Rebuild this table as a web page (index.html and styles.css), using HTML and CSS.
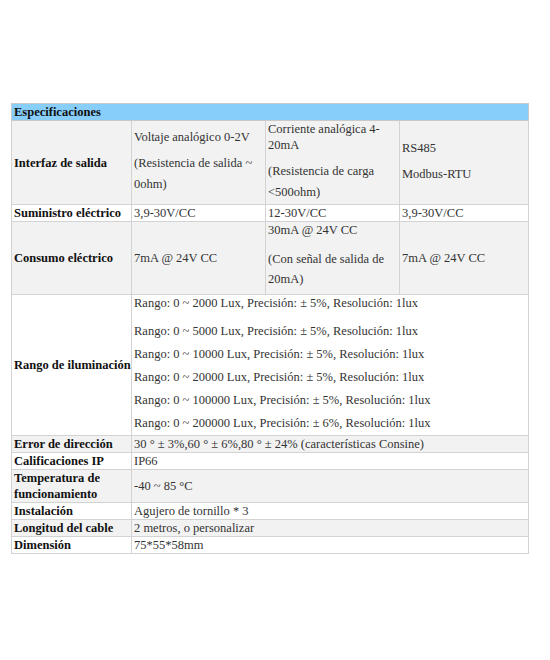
FILE: index.html
```html
<!DOCTYPE html>
<html lang="es">
<head>
<meta charset="utf-8">
<title>Especificaciones</title>
<link rel="stylesheet" href="styles.css">
</head>
<body>
<div class="page">
<table class="spec">
<colgroup>
<col class="c1"><col class="c2"><col class="c3"><col class="c4">
</colgroup>
<tr class="head"><th colspan="4">Especificaciones</th></tr>
<tr class="alt">
<th>Interfaz de salida</th>
<td><div>Voltaje analógico 0-2V</div><p class="sub">(Resistencia de salida ~ 0ohm)</p></td>
<td><div>Corriente analógica 4-20mA</div><p class="sub">(Resistencia de carga &lt;500ohm)</p></td>
<td><div>RS485</div><p class="sub">Modbus-RTU</p></td>
</tr>
<tr>
<th>Suministro eléctrico</th>
<td>3,9-30V/CC</td>
<td>12-30V/CC</td>
<td>3,9-30V/CC</td>
</tr>
<tr class="alt">
<th>Consumo eléctrico</th>
<td>7mA @ 24V CC</td>
<td><div>30mA @ 24V CC</div><p class="sub power">(Con señal de salida de 20mA)</p></td>
<td>7mA @ 24V CC</td>
</tr>
<tr>
<th class="nowrap">Rango de iluminación</th>
<td colspan="3"><div>Rango: 0 ~ 2000 Lux, Precisión: ± 5%, Resolución: 1lux</div><p class="sub range">Rango: 0 ~ 5000 Lux, Precisión: ± 5%, Resolución: 1lux<br>Rango: 0 ~ 10000 Lux, Precisión: ± 5%, Resolución: 1lux<br>Rango: 0 ~ 20000 Lux, Precisión: ± 5%, Resolución: 1lux<br>Rango: 0 ~ 100000 Lux, Precisión: ± 5%, Resolución: 1lux<br>Rango: 0 ~ 200000 Lux, Precisión: ± 6%, Resolución: 1lux</p></td>
</tr>
<tr class="alt">
<th>Error de dirección</th>
<td colspan="3">30 ° ± 3%,60 ° ± 6%,80 ° ± 24% (características Consine)</td>
</tr>
<tr>
<th>Calificaciones IP</th>
<td colspan="3">IP66</td>
</tr>
<tr class="alt">
<th>Temperatura de funcionamiento</th>
<td colspan="3">-40 ~ 85 °C</td>
</tr>
<tr>
<th>Instalación</th>
<td colspan="3">Agujero de tornillo * 3</td>
</tr>
<tr class="alt">
<th>Longitud del cable</th>
<td colspan="3">2 metros, o personalizar</td>
</tr>
<tr>
<th>Dimensión</th>
<td colspan="3">75*55*58mm</td>
</tr>
</table>
</div>
</body>
</html>
```
FILE: styles.css
```css
html, body {
  margin: 0;
  padding: 0;
  background: #ffffff;
}
.page {
  padding: 103px 0 0 11px;
}
.spec {
  border-collapse: collapse;
  table-layout: fixed;
  width: 517px;
  font-family: "Liberation Serif", serif;
  font-size: 12.5px;
  line-height: 16px;
  color: #333;
}
.c1 { width: 120px; }
.c2 { width: 134px; }
.c3 { width: 134px; }
.c4 { width: 129px; }
.spec th,
.spec td {
  border: 1px solid #d3d3d3;
  padding: 0 2px;
  vertical-align: middle;
  text-align: left;
}
.spec th {
  font-weight: bold;
  color: #111;
}
.spec th.nowrap {
  white-space: nowrap;
  padding-right: 0;
}
.spec .head th {
  background: #87cefa;
  border-color: #c9c9c9;
  height: 16px;
}
.spec tr.alt th,
.spec tr.alt td {
  background: #f2f2f2;
}
.sub {
  margin: 8px 0 1px;
  line-height: 21px;
}
.sub.power {
  margin: 11px 0 5px;
  line-height: 20px;
}
.sub.range {
  line-height: 23px;
  margin: 9px 0 0;
}
```
